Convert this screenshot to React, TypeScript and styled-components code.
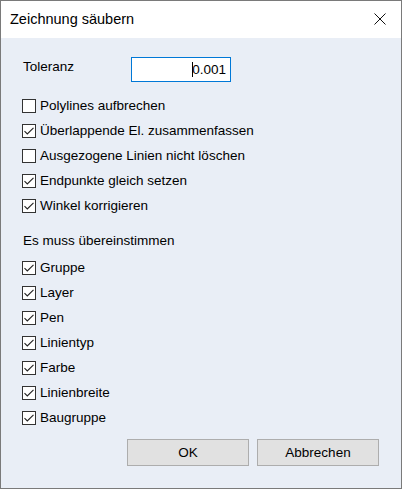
import React from "react";
import styled, { createGlobalStyle } from "styled-components";

const Global = createGlobalStyle`
  html, body { margin: 0; padding: 0; background: #ffffff; }
  * { box-sizing: border-box; }
`;

const Window = styled.div`
  width: 402px;
  height: 489px;
  border: 1px solid #7a7a7a;
  display: flex;
  flex-direction: column;
  background: #e9eef6;
  font-family: "Liberation Sans", Arial, sans-serif;
  font-size: 13.5px;
  color: #000;
`;

const TitleBar = styled.div`
  height: 37px;
  background: #ffffff;
  display: flex;
  align-items: center;
  justify-content: space-between;
  padding: 0 15px 0 9px;
  flex-shrink: 0;
`;

const Title = styled.div`
  font-size: 14.5px;
  margin-top: -1px;
`;

const CloseIcon = styled.svg`
  width: 12px;
  height: 12px;
  margin-top: -2px;
`;

const Body = styled.div`
  flex: 1;
  display: flex;
  flex-direction: column;
  padding: 19px 22px 0 21px;
`;

const ToleranceRow = styled.div`
  display: flex;
  align-items: flex-start;
  height: 25px;
`;

const FieldLabel = styled.div`
  width: 109px;
  padding-left: 1px;
  padding-top: 2px;
`;

const Input = styled.div`
  width: 100px;
  height: 25px;
  background: #fff;
  border: 1px solid #0078d7;
  display: flex;
  align-items: center;
  justify-content: flex-end;
  padding-right: 4px;
`;

const Caret = styled.span`
  display: inline-block;
  width: 1px;
  height: 15px;
  background: #000;
  margin-right: -1px;
`;

const Group = styled.div<{ $top: number }>`
  display: flex;
  flex-direction: column;
  margin-top: ${(p) => p.$top}px;
`;

const Row = styled.div`
  height: 25px;
  display: flex;
  align-items: center;
`;

const Box = styled.div`
  width: 14px;
  height: 14px;
  border: 1px solid #333;
  background: #fff;
  display: flex;
  align-items: center;
  justify-content: center;
  flex-shrink: 0;
`;

const Label = styled.span`
  margin-left: 4px;
  white-space: nowrap;
`;

const Header = styled.div`
  height: 25px;
  display: flex;
  align-items: center;
  margin-top: 10px;
  padding-left: 1px;
`;

const Buttons = styled.div`
  display: flex;
  justify-content: flex-end;
  gap: 8px;
  margin-top: 9px;
`;

const Button = styled.div`
  width: 122px;
  height: 27px;
  background: #e1e1e1;
  border: 1px solid #adadad;
  display: flex;
  align-items: center;
  justify-content: center;
`;

const Check = () => (
  <svg width="12" height="12" viewBox="0 0 12 12">
    <path d="M1.5 6.2 L4.3 9 L10.5 2.8" fill="none" stroke="#222" strokeWidth="1.1" />
  </svg>
);

const CheckItem = ({ label, checked }: { label: string; checked: boolean }) => (
  <Row>
    <Box>{checked && <Check />}</Box>
    <Label>{label}</Label>
  </Row>
);

const group1: [string, boolean][] = [
  ["Polylines aufbrechen", false],
  ["Überlappende El. zusammenfassen", true],
  ["Ausgezogene Linien nicht löschen", false],
  ["Endpunkte gleich setzen", true],
  ["Winkel korrigieren", true],
];

const group2: [string, boolean][] = [
  ["Gruppe", true],
  ["Layer", true],
  ["Pen", true],
  ["Linientyp", true],
  ["Farbe", true],
  ["Linienbreite", true],
  ["Baugruppe", true],
];

export default function App() {
  return (
    <>
      <Global />
      <Window>
        <TitleBar>
          <Title>Zeichnung säubern</Title>
          <CloseIcon viewBox="0 0 12 12">
            <path d="M0.5 0.5 L11.5 11.5 M11.5 0.5 L0.5 11.5" stroke="#111" strokeWidth="1" fill="none" />
          </CloseIcon>
        </TitleBar>
        <Body>
          <ToleranceRow>
            <FieldLabel>Toleranz</FieldLabel>
            <Input>
              <Caret />
              <span>0.001</span>
            </Input>
          </ToleranceRow>
          <Group $top={11}>
            {group1.map(([l, c]) => (
              <CheckItem key={l} label={l} checked={c} />
            ))}
          </Group>
          <Header>Es muss übereinstimmen</Header>
          <Group $top={2}>
            {group2.map(([l, c]) => (
              <CheckItem key={l} label={l} checked={c} />
            ))}
          </Group>
          <Buttons>
            <Button>OK</Button>
            <Button>Abbrechen</Button>
          </Buttons>
        </Body>
      </Window>
    </>
  );
}
